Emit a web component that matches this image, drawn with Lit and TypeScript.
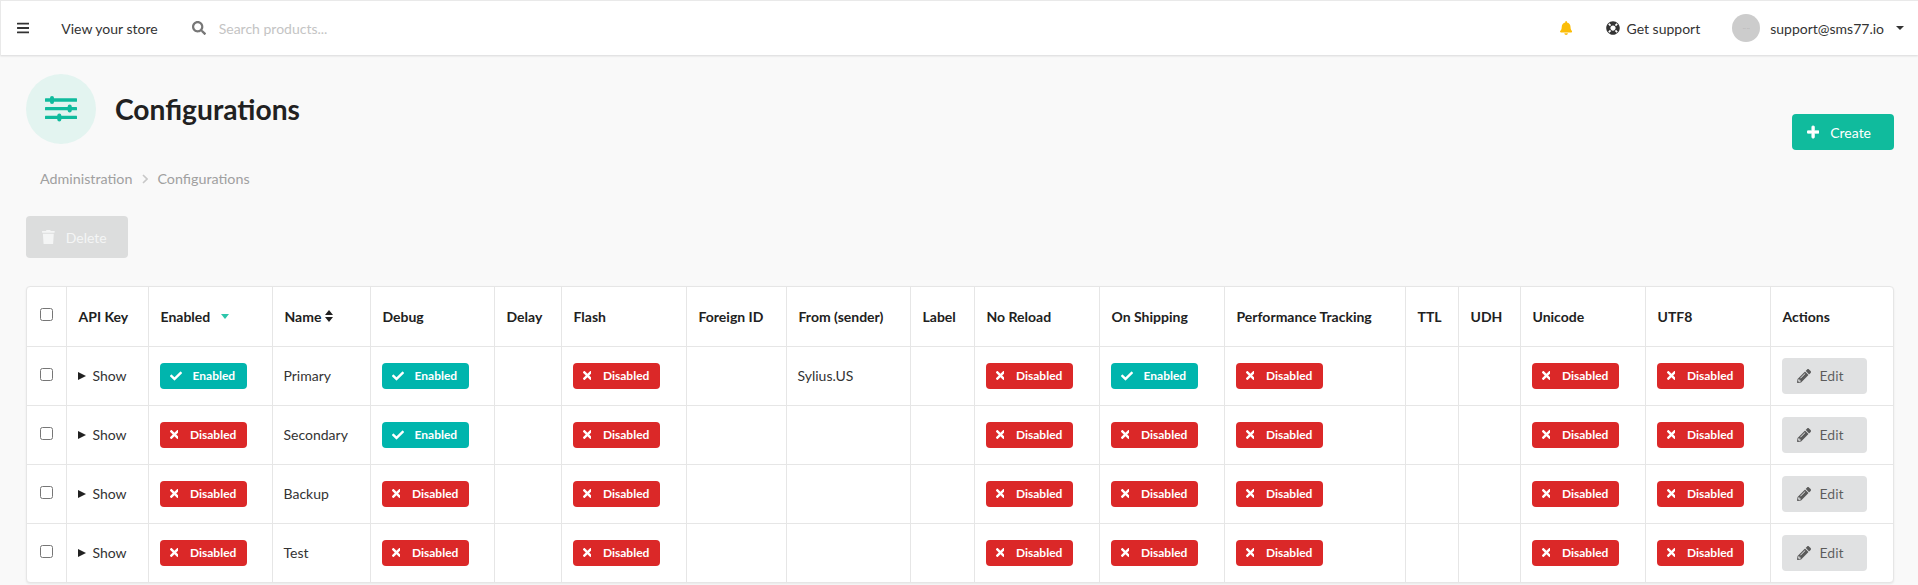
import { LitElement, html, css, svg } from "lit";
import { customElement } from "lit/decorators.js";

const icon = (vb: string, d: string, cls = "") =>
  html`<svg class="icon ${cls}" viewBox=${vb} aria-hidden="true">${svg`<path fill="currentColor" d=${d}></path>`}</svg>`;

const SEARCH = "M505 442.7L405.3 343c-4.5-4.5-10.6-7-17-7H372c27.6-35.3 44-79.7 44-128C416 93.1 322.9 0 208 0S0 93.1 0 208s93.1 208 208 208c48.3 0 92.7-16.4 128-44v16.3c0 6.4 2.5 12.5 7 17l99.7 99.7c9.4 9.4 24.6 9.4 33.9 0l28.3-28.3c9.4-9.4 9.4-24.6.1-34zM208 336c-70.7 0-128-57.2-128-128 0-70.7 57.2-128 128-128 70.7 0 128 57.2 128 128 0 70.7-57.2 128-128 128z";
const BELL = "M224 512c35.32 0 63.97-28.65 63.97-64H160.03c0 35.35 28.65 64 63.97 64zm215.39-149.71c-19.32-20.76-55.47-51.99-55.47-154.29 0-77.7-54.48-139.9-127.94-155.16V32c0-17.67-14.32-32-31.98-32s-31.98 14.33-31.98 32v20.84C118.56 68.1 64.08 130.3 64.08 208c0 102.3-36.15 133.53-55.47 154.29-6 6.45-8.66 14.16-8.61 21.71.11 16.4 12.98 32 32.1 32h383.8c19.12 0 32-15.6 32.1-32 .05-7.55-2.61-15.27-8.61-21.71z";
const RING = "M256 8C119.033 8 8 119.033 8 256s111.033 248 248 248 248-111.033 248-248S392.967 8 256 8zm173.696 119.559l-63.399 63.399c-10.987-18.559-26.67-34.252-45.255-45.255l63.399-63.399a218.396 218.396 0 0 1 45.255 45.255zM256 352c-53.019 0-96-42.981-96-96s42.981-96 96-96 96 42.981 96 96-42.981 96-96 96zM127.559 82.304l63.399 63.399c-18.559 10.987-34.252 26.67-45.255 45.255l-63.399-63.399a218.372 218.372 0 0 1 45.255-45.255zM82.304 384.441l63.399-63.399c10.987 18.559 26.67 34.252 45.255 45.255l-63.399 63.399a218.396 218.396 0 0 1-45.255-45.255zm302.137 45.255l-63.399-63.399c18.559-10.987 34.252-26.67 45.255-45.255l63.399 63.399a218.403 218.403 0 0 1-45.255 45.255z";
const CHECK = "M173.898 439.404l-166.4-166.4c-9.997-9.997-9.997-26.206 0-36.204l36.203-36.204c9.997-9.998 26.207-9.998 36.204 0L192 312.69 432.095 72.596c9.997-9.997 26.207-9.997 36.204 0l36.203 36.204c9.997 9.997 9.997 26.206 0 36.204l-294.4 294.401c-9.998 9.997-26.207 9.997-36.204-.001z";
const TIMES = "M242.72 256l100.07-100.07c12.28-12.28 12.28-32.19 0-44.48l-22.24-22.24c-12.28-12.28-32.19-12.28-44.48 0L176 189.28 75.93 89.21c-12.28-12.28-32.19-12.28-44.48 0L9.21 111.45c-12.28 12.28-12.28 32.19 0 44.48L109.28 256 9.21 356.07c-12.28 12.28-12.28 32.19 0 44.48l22.24 22.24c12.28 12.28 32.2 12.28 44.48 0L176 322.72l100.07 100.07c12.28 12.28 32.2 12.28 44.48 0l22.24-22.24c12.28-12.28 12.28-32.19 0-44.48L242.72 256z";
const PLUS = "M416 208H272V64c0-17.67-14.33-32-32-32h-32c-17.67 0-32 14.33-32 32v144H32c-17.67 0-32 14.33-32 32v32c0 17.67 14.33 32 32 32h144v144c0 17.67 14.33 32 32 32h32c17.67 0 32-14.33 32-32V304h144c17.67 0 32-14.33 32-32v-32c0-17.67-14.33-32-32-32z";
const PENCIL = "M497.9 142.1l-46.1 46.1c-4.7 4.7-12.3 4.7-17 0l-111-111c-4.7-4.7-4.7-12.3 0-17l46.1-46.1c18.7-18.7 49.1-18.7 67.9 0l60.1 60.1c18.8 18.7 18.8 49.1 0 67.9zM284.2 99.8L21.6 362.4.4 483.9c-2.9 16.4 11.4 30.6 27.8 27.8l121.5-21.3 262.6-262.6c4.7-4.7 4.7-12.3 0-17l-111-111c-4.8-4.7-12.4-4.7-17.1 0zM124.1 339.9c-5.5-5.5-5.5-14.3 0-19.8l154-154c5.5-5.5 14.3-5.5 19.8 0s5.5 14.3 0 19.8l-154 154c-5.5 5.5-14.3 5.5-19.8 0zM88 424h48v36.3l-64.5 11.3-31.1-31.1L51.7 376H88v48z";
const TRASH = "M432 32H312l-9.4-18.7A24 24 0 0 0 281.1 0H166.8a23.72 23.72 0 0 0-21.4 13.3L136 32H16A16 16 0 0 0 0 48v32a16 16 0 0 0 16 16h416a16 16 0 0 0 16-16V48a16 16 0 0 0-16-16zM53.2 467a48 48 0 0 0 47.9 45h245.8a48 48 0 0 0 47.9-45L416 128H32z";
const BARS = "M16 132h416c8.8 0 16-7.2 16-16V76c0-8.8-7.2-16-16-16H16C7.2 60 0 67.2 0 76v40c0 8.8 7.2 16 16 16zm0 160h416c8.8 0 16-7.2 16-16v-40c0-8.8-7.2-16-16-16H16c-8.8 0-16 7.2-16 16v40c0 8.8 7.2 16 16 16zm0 160h416c8.8 0 16-7.2 16-16v-40c0-8.8-7.2-16-16-16H16c-8.8 0-16 7.2-16 16v40c0 8.8 7.2 16 16 16z";

// column widths read off the reference
const COLS = [39, 82, 124, 98, 124, 67, 125, 100, 124, 64, 125, 125, 181, 53, 62, 125, 125, 123];
const HEADERS = ["API Key", "Enabled", "Name", "Debug", "Delay", "Flash", "Foreign ID", "From (sender)", "Label", "No Reload", "On Shipping", "Performance Tracking", "TTL", "UDH", "Unicode", "UTF8", "Actions"];

interface Row {
  name: string;
  enabled?: boolean;
  debug?: boolean;
  from?: string;
  onShipping?: boolean;
}

const ROWS: Row[] = [
  { name: "Primary", enabled: true, debug: true, from: "Sylius.US", onShipping: true },
  { name: "Secondary", debug: true },
  { name: "Backup" },
  { name: "Test" },
];

@customElement("app-root")
export class AppRoot extends LitElement {
  static styles = css`
    :host {
      display: block;
      min-height: 585px;
      background: #f9f9f9;
      font-family: Lato, "Open Sans", sans-serif;
      font-size: 14px;
      color: rgba(0, 0, 0, 0.87);
      overflow: hidden;
    }
    .icon {
      display: block;
      height: 14px;
      flex: none;
    }
    .topbar {
      display: flex;
      align-items: center;
      box-sizing: border-box;
      height: 55px;
      background: #fff;
      border-top: 1px solid #e9e9e9;
      border-left: 1px solid #e9e9e9;
      box-shadow: 0 1px 2px rgba(34, 36, 38, 0.15);
    }
    .menu { margin-left: 16px; color: #333; }
    .store { margin-left: 32px; color: #333; }
    .search { margin-left: 34px; color: #777; }
    .topbar input {
      margin-left: 13px;
      width: 300px;
      padding: 0;
      border: 0;
      outline: 0;
      background: none;
      font: inherit;
    }
    .topbar input::placeholder { color: #c4c4c4; opacity: 1; }
    .right {
      display: flex;
      align-items: center;
      margin-left: auto;
      margin-right: 14px;
      color: #333;
    }
    .bell { color: #fbbd08; }
    .support { display: flex; align-items: center; gap: 6px; margin-left: 34px; }
    .avatar {
      display: flex;
      align-items: center;
      justify-content: center;
      width: 28px;
      height: 28px;
      margin: 0 10px 0 32px;
      border-radius: 50%;
      background: #ccc;
      color: #999;
      font-size: 4px;
    }
    .caret {
      width: 0;
      height: 0;
      margin-left: 12px;
      border: 4px solid transparent;
      border-top: 4px solid #333;
      border-bottom: 0;
    }
    main {
      padding: 19px 24px 0 26px;
    }
    .head {
      display: flex;
      align-items: flex-end;
      justify-content: space-between;
    }
    .title {
      display: flex;
      align-items: center;
      gap: 19px;
    }
    .circle {
      display: flex;
      align-items: center;
      justify-content: center;
      width: 70px;
      height: 70px;
      border-radius: 50%;
      background: #e3f4f0;
      color: #10bb9d;
    }
    .circle svg { display: block; width: 32px; height: 26px; }
    h1 {
      margin: 0;
      font-size: 28.2px;
      font-weight: 700;
      line-height: 32px;
      color: #212121;
    }
    .btn {
      display: flex;
      align-items: center;
      border: 0;
      border-radius: 4px;
      font-family: inherit;
      font-size: 14px;
      font-weight: 400;
    }
    .create {
      width: 102px;
      height: 36px;
      margin-bottom: -6px;
      padding: 0 0 0 15px;
      gap: 11px;
      background: #10bb9d;
      color: #fff;
    }
    .create .icon path { stroke: currentColor; stroke-width: 24px; }
    .crumbs {
      display: flex;
      align-items: center;
      gap: 9.5px;
      margin: 25px 0 0 14px;
      font-size: 14.3px;
      line-height: 20px;
      color: #a0a0a0;
    }
    .crumbs svg { display: block; width: 6px; height: 10px; }
    .delete {
      width: 102px;
      height: 42px;
      margin-top: 27px;
      padding: 0 0 0 16px;
      gap: 11px;
      background: #dcdddd;
      color: #f4f5f5;
    }
    .delete .icon { height: 14.5px; }
    .panel {
      margin-top: 28px;
      border: 1px solid #e6e6e6;
      border-radius: 4px;
      background: #fff;
      box-shadow: 0 1px 2px rgba(34, 36, 38, 0.08);
      width: 1868px;
      box-sizing: border-box;
    }
    table {
      width: 100%;
      table-layout: fixed;
      border-collapse: collapse;
    }
    th, td {
      height: 59px;
      padding: 0 11px;
      box-sizing: border-box;
      border-left: 1px solid #e6e6e6;
      border-top: 1px solid #e6e6e6;
      text-align: left;
      white-space: nowrap;
      color: #333;
      font-weight: 400;
    }
    th {
      padding-left: 12px;
      border-top: 0;
      font-weight: 700;
      color: #212121;
    }
    th:first-child, td:first-child { border-left: 0; }
    .cb, th.cb { padding: 0 0 0 13px; }
    .cb input { display: block; margin: 0 0 3px; width: 13px; height: 13px; }
    details { margin: 0; }
    summary {
      display: flex;
      align-items: center;
      gap: 7px;
      list-style: none;
      cursor: pointer;
    }
    summary::before {
      content: "";
      width: 0;
      height: 0;
      border-left: 8px solid #212121;
      border-top: 4.5px solid transparent;
      border-bottom: 4.5px solid transparent;
    }
    .sort-head { display: inline-flex; align-items: center; gap: 11px; }
    .sort-head.plain { gap: 4px; }
    .tri { width: 8px; height: 5px; fill: #2cc6ab; display: block; }
    .sort { width: 8px; height: 12px; fill: #212121; display: block; }
    .badge {
      display: flex;
      align-items: center;
      box-sizing: border-box;
      width: 87px;
      height: 26px;
      padding-left: 10px;
      gap: 11px;
      border-radius: 4px;
      color: #fff;
      font-size: 12px;
      font-weight: 700;
    }
    .on { background: #00b5ad; }
    .on .icon { height: 12px; }
    .off { background: #db2828; gap: 11.5px; }
    .off .icon { height: 13px; }
    .edit {
      width: 85px;
      height: 36px;
      padding: 0 0 0 15px;
      gap: 9px;
      background: #e0e1e2;
      color: rgba(0, 0, 0, 0.6);
    }
  `;

  badge(on?: boolean) {
    return on
      ? html`<span class="badge on">${icon("0 0 512 512", CHECK)}Enabled</span>`
      : html`<span class="badge off">${icon("0 0 352 512", TIMES)}Disabled</span>`;
  }

  renderRow(r: Row) {
    return html`
      <tr>
        <td class="cb"><input type="checkbox" /></td>
        <td><details><summary>Show</summary></details></td>
        <td>${this.badge(r.enabled)}</td>
        <td>${r.name}</td>
        <td>${this.badge(r.debug)}</td>
        <td></td>
        <td>${this.badge(false)}</td>
        <td></td>
        <td>${r.from ?? ""}</td>
        <td></td>
        <td>${this.badge(false)}</td>
        <td>${this.badge(r.onShipping)}</td>
        <td>${this.badge(false)}</td>
        <td></td>
        <td></td>
        <td>${this.badge(false)}</td>
        <td>${this.badge(false)}</td>
        <td><button class="btn edit">${icon("0 0 512 512", PENCIL)}Edit</button></td>
      </tr>
    `;
  }

  headCell(h: string) {
    if (h === "Enabled") {
      return html`<th><span class="sort-head">${h}<svg class="tri" viewBox="0 0 8 5"><path d="M0 0h8L4 5z"></path></svg></span></th>`;
    }
    if (h === "Name") {
      return html`<th><span class="sort-head plain">${h}<svg class="sort" viewBox="0 0 8 12"><path d="M4 0l4 5H0zM4 12L0 7h8z"></path></svg></span></th>`;
    }
    return html`<th>${h}</th>`;
  }

  render() {
    return html`
      <header class="topbar">
        <span class="menu">${icon("0 0 448 512", BARS)}</span>
        <span class="store">View your store</span>
        <span class="search">${icon("0 0 512 512", SEARCH)}</span>
        <input placeholder="Search products..." />
        <div class="right">
          <span class="bell">${icon("0 0 448 512", BELL)}</span>
          <span class="support">${icon("0 0 512 512", RING)}Get support</span>
          <span class="avatar">-- --</span>
          <span>support@sms77.io</span>
          <span class="caret"></span>
        </div>
      </header>
      <main>
        <div class="head">
          <div class="title">
            <div class="circle">
              <svg viewBox="0 0 32 26" fill="currentColor">
                <rect x="0" y="2.3" width="32" height="3.4" rx="0.5"></rect>
                <rect x="5" y="0" width="4" height="8" rx="2"></rect>
                <rect x="0" y="10.9" width="32" height="3.4" rx="0.5"></rect>
                <rect x="22.7" y="8.6" width="4" height="8" rx="2"></rect>
                <rect x="0" y="19.7" width="32" height="3.4" rx="0.5"></rect>
                <rect x="12.3" y="17.4" width="4" height="8" rx="2"></rect>
              </svg>
            </div>
            <h1>Configurations</h1>
          </div>
          <button class="btn create">${icon("0 0 448 512", PLUS)}Create</button>
        </div>
        <nav class="crumbs">
          <span>Administration</span>
          <svg viewBox="0 0 6 10" fill="none" stroke="#c8c8c8" stroke-width="1.6"><path d="M1 1l4 4-4 4"></path></svg>
          <span>Configurations</span>
        </nav>
        <button class="btn delete">${icon("0 0 448 512", TRASH)}Delete</button>
        <div class="panel">
          <table>
            <colgroup>${COLS.map((w) => html`<col style="width:${w}px" />`)}</colgroup>
            <thead>
              <tr>
                <th class="cb"><input type="checkbox" /></th>
                ${HEADERS.map((h) => this.headCell(h))}
              </tr>
            </thead>
            <tbody>${ROWS.map((r) => this.renderRow(r))}</tbody>
          </table>
        </div>
      </main>
    `;
  }
}
